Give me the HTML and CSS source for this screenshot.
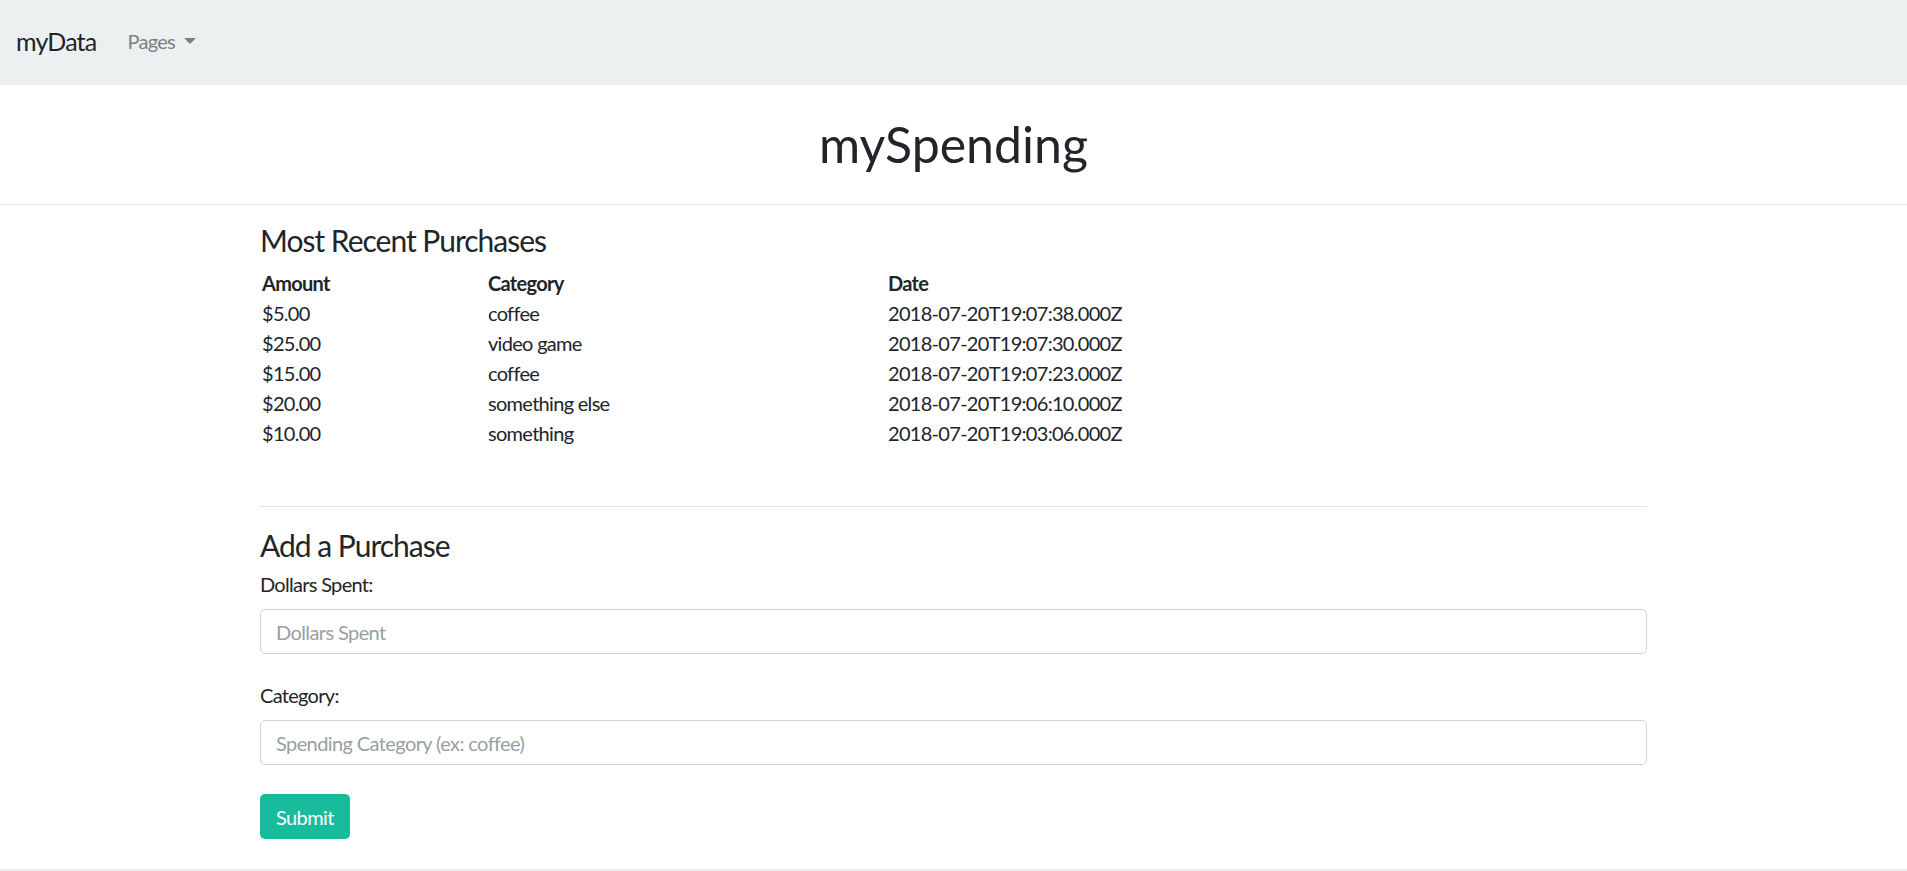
FILE: index.html
```html
<!DOCTYPE html>
<html lang="en">
<head>
<meta charset="utf-8">
<title>mySpending</title>
<link rel="stylesheet" href="styles.css">
</head>
<body>
<nav class="navbar">
  <a class="brand" href="#">myData</a>
  <a class="nav-link" href="#">Pages<span class="caret"></span></a>
</nav>
<header class="page-header">
  <h1 class="title">mySpending</h1>
</header>
<main class="container">
  <h4 class="section-title">Most Recent Purchases</h4>
  <div class="purchases">
    <div class="cell head">Amount</div><div class="cell head">Category</div><div class="cell head">Date</div>
    <div class="cell">$5.00</div><div class="cell">coffee</div><div class="cell">2018-07-20T19:07:38.000Z</div>
    <div class="cell">$25.00</div><div class="cell">video game</div><div class="cell">2018-07-20T19:07:30.000Z</div>
    <div class="cell">$15.00</div><div class="cell">coffee</div><div class="cell">2018-07-20T19:07:23.000Z</div>
    <div class="cell">$20.00</div><div class="cell">something else</div><div class="cell">2018-07-20T19:06:10.000Z</div>
    <div class="cell">$10.00</div><div class="cell">something</div><div class="cell">2018-07-20T19:03:06.000Z</div>
  </div>
  <hr class="divider">
  <h4 class="section-title add-title">Add a Purchase</h4>
  <form class="purchase-form">
    <div class="form-group">
      <label class="form-label" for="dollars">Dollars Spent:</label>
      <input class="form-control" id="dollars" type="text" placeholder="Dollars Spent">
    </div>
    <div class="form-group">
      <label class="form-label" for="category">Category:</label>
      <input class="form-control" id="category" type="text" placeholder="Spending Category (ex: coffee)">
    </div>
    <button class="btn-submit" type="button">Submit</button>
  </form>
</main>
<footer class="footer"></footer>
</body>
</html>
```

FILE: styles.css
```css
* { box-sizing: border-box; }

html, body {
  margin: 0;
  padding: 0;
}

body {
  font-family: Lato, "Open Sans", "Liberation Sans", sans-serif;
  font-size: 20px;
  line-height: 30px;
  letter-spacing: -0.7px;
  color: #212529;
  background: #fff;
}

.navbar {
  height: 85px;
  background: #ecf0f1;
  display: flex;
  align-items: center;
  padding: 0 15px 3px 15px;
}

.brand {
  font-size: 25px;
  line-height: 37px;
  letter-spacing: -0.8px;
  color: #212529;
  text-decoration: none;
  margin-left: 1px;
  margin-right: 31px;
}

.nav-link {
  font-size: 20px;
  line-height: 30px;
  color: #7c8080;
  text-decoration: none;
  display: inline-flex;
  align-items: center;
}

.caret {
  display: inline-block;
  width: 0;
  height: 0;
  margin-left: 9px;
  border-top: 6px solid #7c8080;
  border-left: 6px solid transparent;
  border-right: 6px solid transparent;
}

.page-header {
  padding: 29px 0 30px;
  border-bottom: 1px solid #e6e6e6;
  text-align: center;
}

.title {
  margin: 0;
  font-size: 50px;
  line-height: 60px;
  font-weight: 400;
  letter-spacing: 0;
  color: #212529;
}

.container {
  width: 1387px;
  margin: 0 auto;
  padding-top: 17px;
}

.section-title {
  margin: 0 0 10px;
  font-size: 30px;
  line-height: 36px;
  font-weight: 400;
  letter-spacing: -1px;
}

.purchases {
  display: grid;
  grid-template-columns: 226px 400px 1fr;
  padding-left: 2px;
}

.cell {
  height: 30px;
  line-height: 30px;
  white-space: nowrap;
}

.cell.head {
  font-weight: 700;
}

.divider {
  margin: 58px 0 20px;
  border: 0;
  border-top: 1px solid #e3e3e3;
  height: 0;
}

.add-title {
  margin-bottom: 6px;
}

.form-group {
  margin-bottom: 26px;
}

.form-label {
  display: block;
  margin-bottom: 10px;
  line-height: 30px;
}

.form-control {
  display: block;
  width: 100%;
  height: 45px;
  padding: 0 15px;
  font-family: inherit;
  font-size: 20px;
  letter-spacing: -0.6px;
  color: #212529;
  background: #fff;
  border: 1px solid #ced4da;
  border-radius: 5px;
  outline: none;
}

.form-control::placeholder {
  color: #979fa3;
  opacity: 1;
}

.purchase-form .form-group + .btn-submit {
  margin-top: 3px;
}

.btn-submit {
  display: inline-block;
  height: 45px;
  padding: 0 16px;
  font-family: inherit;
  font-size: 20px;
  letter-spacing: -0.6px;
  color: #fff;
  background: #18bc9c;
  border: 0;
  border-radius: 5px;
  cursor: pointer;
}

.footer {
  margin-top: 30px;
  height: 2px;
  border-top: 1px solid #e6e6e6;
  background: #f2f2f2;
}
```
